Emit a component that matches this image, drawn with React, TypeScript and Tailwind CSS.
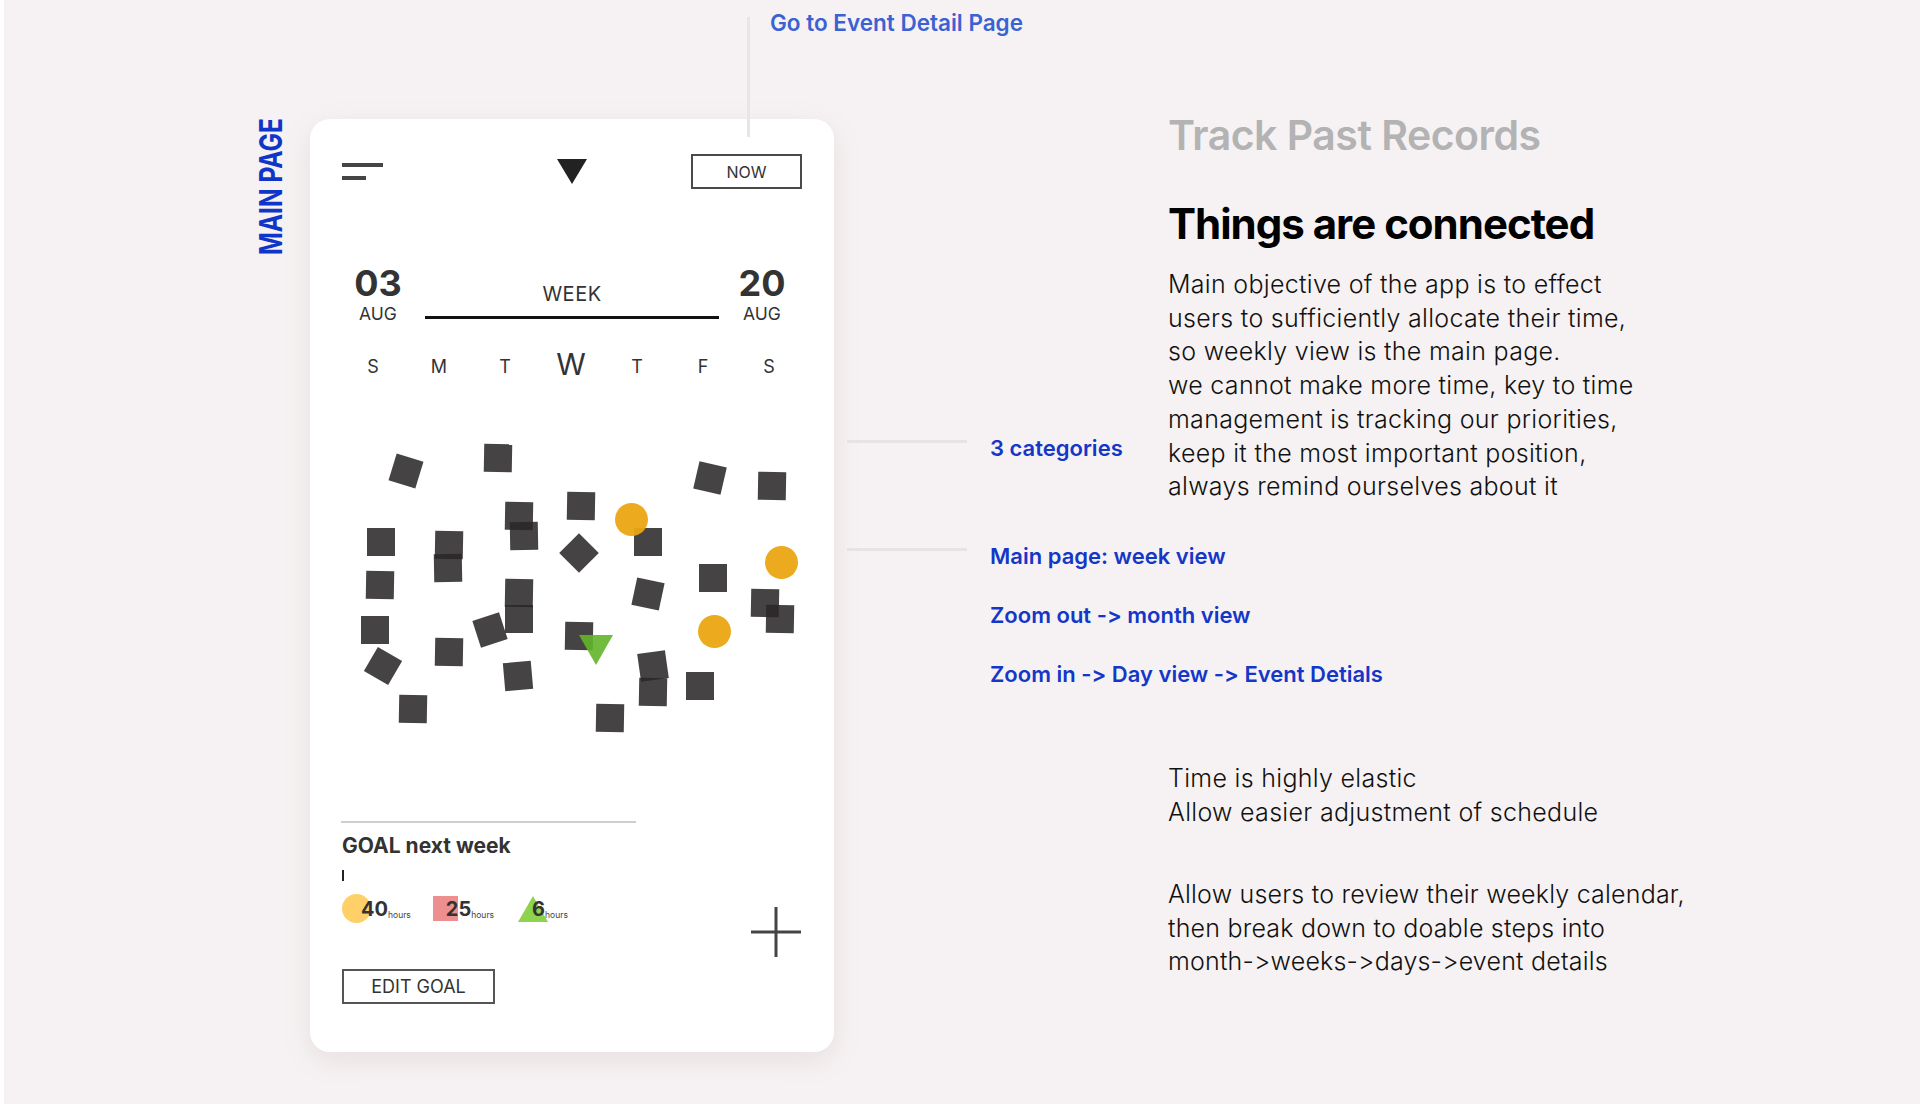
import React from "react";

// [cx, cy, rotate] relative to the canvas area of the card
const SQUARES: [number, number, number][] = [
  [96, 91, 17],
  [188, 78, 1],
  [400, 98, 13],
  [462, 106, 1],
  [209, 136, 1],
  [214, 156, -1],
  [271, 126, 1],
  [338, 162, 0],
  [269, 173, 45],
  [71, 162, 0],
  [139, 165, 1],
  [138, 188, -1],
  [70, 205, 1],
  [403, 198, 0],
  [338, 214, 12],
  [209, 213, 1],
  [209, 239, 0],
  [455, 223, 1],
  [470, 239, 1],
  [65, 250, 0],
  [180, 250, -18],
  [269, 256, 1],
  [73, 286, 30],
  [139, 272, 1],
  [208, 296, -5],
  [343, 286, -8],
  [343, 312, 1],
  [390, 306, 0],
  [103, 329, 1],
  [300, 338, 1],
];

const CIRCLES: [number, number][] = [
  [321.5, 140],
  [471, 183],
  [404, 252],
];

const DAYS = ["S", "M", "T", "W", "T", "F", "S"];

function WeekCanvas() {
  return (
    <div className="relative h-[420px] w-full">
      {SQUARES.map(([cx, cy, r], i) => (
        <div
          key={i}
          className="absolute h-[28px] w-[28px] bg-[#2b2728]/[0.87]"
          style={{ left: cx - 14, top: cy - 14, transform: `rotate(${r}deg)` }}
        />
      ))}
      {CIRCLES.map(([cx, cy], i) => (
        <div
          key={`c${i}`}
          className="absolute h-[33px] w-[33px] rounded-full bg-[#eba612]/[0.95]"
          style={{ left: cx - 16.5, top: cy - 16.5 }}
        />
      ))}
      <svg className="absolute left-[269px] top-[255px]" width="34" height="30" viewBox="0 0 34 30">
        <polygon points="0,0 34,0 17,30" fill="#62b52a" fillOpacity="0.9" />
      </svg>
    </div>
  );
}

function PhoneCard() {
  return (
    <div className="flex h-[933px] w-[524px] shrink-0 flex-col rounded-[20px] bg-white shadow-[0_8px_28px_rgba(140,100,90,0.13)]">
      {/* Header */}
      <div className="mt-[35px] grid h-[35px] grid-cols-3 items-center px-[32px]">
        <div className="flex flex-col gap-[9.5px]">
          <div className="h-[3.5px] w-[41px] bg-[#454545]" />
          <div className="h-[3.5px] w-[24px] bg-[#454545]" />
        </div>
        <div className="flex justify-center">
          <svg width="30" height="25" viewBox="0 0 30 25">
            <polygon points="0,0 30,0 15,25" fill="#222" />
          </svg>
        </div>
        <div className="flex justify-end">
          <div className="flex h-[35px] w-[111px] items-center justify-center border-2 border-[#4a4a4a] text-[16px] text-[#333]">
            NOW
          </div>
        </div>
      </div>

      {/* Dates */}
      <div className="mt-[76px] flex items-start px-[32px] text-[#333]">
        <div className="flex w-[72px] flex-col items-center">
          <span className="text-[36px] font-bold leading-none">03</span>
          <span className="mt-[4px] text-[17.5px] leading-none">AUG</span>
        </div>
        <div className="ml-[11px] mr-[7px] flex flex-1 flex-col items-center">
          <span className="mt-[19px] text-[20px] leading-none tracking-[0.5px]">WEEK</span>
          <div className="mt-[12px] h-[3px] w-full bg-[#111]" />
        </div>
        <div className="mr-[4px] flex w-[72px] flex-col items-center">
          <span className="text-[36px] font-bold leading-none">20</span>
          <span className="mt-[4px] text-[17.5px] leading-none">AUG</span>
        </div>
      </div>

      {/* Days */}
      <div className="mt-[26px] grid grid-cols-7 items-baseline pl-[30px] pr-[32px] text-[#333]">
        {DAYS.map((d, i) => (
          <span
            key={i}
            className={
              i === 3
                ? "text-center text-[30px] leading-none"
                : "relative -top-[2px] text-center text-[18px] leading-none"
            }
          >
            {d}
          </span>
        ))}
      </div>

      <div className="mt-[1px]">
        <WeekCanvas />
      </div>

      {/* Goals */}
      <div className="ml-[31px] mt-[21px] h-[2px] w-[295px] bg-[#cfcfcf]" />
      <div className="mt-[12px] pl-[32px] text-[21px] font-bold leading-none text-[#333]">
        GOAL next week
      </div>
      <div className="ml-[32px] mt-[14px] h-[11px] w-[1.5px] bg-[#222]" />

      <div className="flex items-start pl-[32px] pr-[33px]">
        <div className="flex flex-col">
          <div className="mt-[13px] flex h-[30px] items-center text-[#333]">
            <div className="h-[29px] w-[29px] rounded-full bg-[#ffcf68]" />
            <span className="-ml-[10px] text-[20px] font-bold leading-none">40</span>
            <span className="self-end pb-[4px] text-[8.5px] leading-none text-[#444]">hours</span>

            <div className="ml-[22px] h-[25px] w-[25px] bg-[#ee8f8f]" />
            <span className="-ml-[12px] text-[20px] font-bold leading-none">25</span>
            <span className="self-end pb-[4px] text-[8.5px] leading-none text-[#444]">hours</span>

            <svg className="ml-[24px]" width="30" height="26" viewBox="0 0 30 26">
              <polygon points="15,0 30,26 0,26" fill="#8fd24e" />
            </svg>
            <span className="-ml-[16px] text-[20px] font-bold leading-none">6</span>
            <span className="self-end pb-[4px] text-[8.5px] leading-none text-[#444]">hours</span>
          </div>
          <div className="mt-[45px] flex h-[35px] w-[153px] items-center justify-center border-2 border-[#555] text-[18px] text-[#333]">
            EDIT GOAL
          </div>
        </div>
        <svg className="ml-auto mt-[26px]" width="50" height="50" viewBox="0 0 50 50">
          <line x1="25" y1="0" x2="25" y2="50" stroke="#444" strokeWidth="3" />
          <line x1="0" y1="25" x2="50" y2="25" stroke="#444" strokeWidth="3" />
        </svg>
      </div>
    </div>
  );
}

function Note({ text, line }: { text: string; line?: boolean }) {
  return (
    <div className="flex h-[30px] items-start whitespace-nowrap">
      {line ? (
        <div className="mt-[7px] h-[3px] w-[120px] shrink-0 bg-[#e4e4e4]" />
      ) : (
        <div className="w-[120px] shrink-0" />
      )}
      <span className="ml-[23px] shrink-0 text-[22px] font-semibold leading-[30px] text-[#1437c8]">
        {text}
      </span>
    </div>
  );
}

export default function App() {
  return (
    <div className="relative h-[1104px] w-[1920px] overflow-hidden border-l-4 border-white bg-[#f6f2f3] font-['Inter',sans-serif] [font-feature-settings:'calt'_0]">
      {/* connector to event detail */}
      <div className="absolute left-[743px] top-[17px] h-[120px] w-[3px] bg-[#e6e6e6]" />
      <div className="absolute left-[766px] top-[8px] text-[22.5px] font-semibold leading-[30px] text-[#3a62d3]">
        Go to Event Detail Page
      </div>

      <div className="flex items-start pl-[254px] pt-[119px]">
        {/* vertical label */}
        <div className="flex h-[136px] w-[25px] shrink-0 items-center justify-center overflow-visible">
          <span className="rotate-180 scale-y-[0.79] whitespace-nowrap text-[31px] font-bold leading-none text-[#1035c9] [writing-mode:vertical-rl]">
            MAIN PAGE
          </span>
        </div>

        <div className="ml-[27px]">
          <PhoneCard />
        </div>

        {/* annotations */}
        <div className="ml-[13px] flex w-[321px] shrink-0 flex-col">
          <div className="mt-[314px]">
            <Note text="3 categories" line />
          </div>
          <div className="mt-[78px]">
            <Note text="Main page: week view" line />
          </div>
          <div className="mt-[29px]">
            <Note text="Zoom out -> month view" />
          </div>
          <div className="mt-[29px]">
            <Note text="Zoom in -> Day view -> Event Detials" />
          </div>
        </div>

        {/* right text */}
        <div className="-mt-[4px] flex flex-col text-[#111]">
          <h2 className="text-[41px] font-semibold leading-none tracking-[-0.5px] text-[#b3b3b3]">
            Track Past Records
          </h2>
          <h1 className="mt-[47px] text-[42px] font-bold leading-none tracking-[-1px] text-black">
            Things are connected
          </h1>
          <p className="mt-[23px] text-[25px] font-light leading-[33.7px] tracking-[0.3px]">
            Main objective of the app is to effect
            <br />
            users to sufficiently allocate their time,
            <br />
            so weekly view is the main page.
            <br />
            we cannot make more time, key to time
            <br />
            management is tracking our priorities,
            <br />
            keep it the most important position,
            <br />
            always remind ourselves about it
          </p>
          <p className="mt-[258px] text-[25px] font-light leading-[33.7px] tracking-[0.3px]">
            Time is highly elastic
            <br />
            Allow easier adjustment of schedule
          </p>
          <p className="mt-[49px] text-[25px] font-light leading-[33.5px] tracking-[0.2px]">
            Allow users to review their weekly calendar,
            <br />
            then break down to doable steps into
            <br />
            month-&gt;weeks-&gt;days-&gt;event details
          </p>
        </div>
      </div>
    </div>
  );
}
